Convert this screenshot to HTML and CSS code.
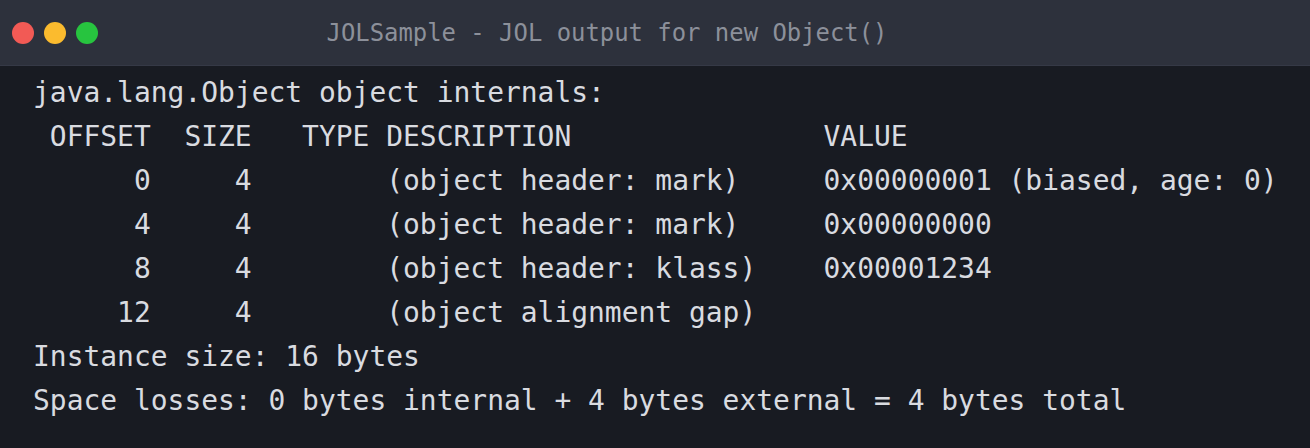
FILE: index.html
```
<!DOCTYPE html>
<html>
<head>
<meta charset="utf-8">
<link rel="stylesheet" href="styles.css">
</head>
<body>
<div class="window">
  <div class="titlebar">
    <div class="lights">
      <span class="light red"></span>
      <span class="light yellow"></span>
      <span class="light green"></span>
    </div>
    <div class="title">JOLSample - JOL output for new Object()</div>
  </div>
<pre class="output">java.lang.Object object internals:
 OFFSET  SIZE   TYPE DESCRIPTION               VALUE
      0     4        (object header: mark)     0x00000001 (biased, age: 0)
      4     4        (object header: mark)     0x00000000
      8     4        (object header: klass)    0x00001234
     12     4        (object alignment gap)
Instance size: 16 bytes
Space losses: 0 bytes internal + 4 bytes external = 4 bytes total</pre>
</div>
</body>
</html>
```
FILE: styles.css
```
html, body {
  margin: 0;
  padding: 0;
  background: #181b22;
}
.window {
  width: 1310px;
  height: 448px;
  display: flex;
  flex-direction: column;
  background: #181b22;
  overflow: hidden;
}
.titlebar {
  height: 65px;
  flex: none;
  background: #2d313c;
  border-bottom: 1px solid #353946;
  display: flex;
  align-items: center;
  position: relative;
}
.lights {
  display: flex;
  gap: 10px;
  padding-left: 12px;
}
.light {
  width: 22px;
  height: 22px;
  border-radius: 50%;
  display: block;
}
.red { background: #f25a55; }
.yellow { background: #fbbb2e; }
.green { background: #27c43f; }
.title {
  position: absolute;
  left: 0;
  right: 0;
  top: 0;
  bottom: 0;
  display: flex;
  align-items: center;
  justify-content: center;
  font-family: "DejaVu Sans Mono", monospace;
  font-size: 23.9px;
  color: #8c909a;
  padding-right: 96px;
}
.output {
  margin: 0;
  padding: 5px 0 0 33px;
  font-family: "DejaVu Sans Mono", monospace;
  font-size: 27.95px;
  line-height: 44px;
  color: #d9dbe0;
  white-space: pre;
}
```
